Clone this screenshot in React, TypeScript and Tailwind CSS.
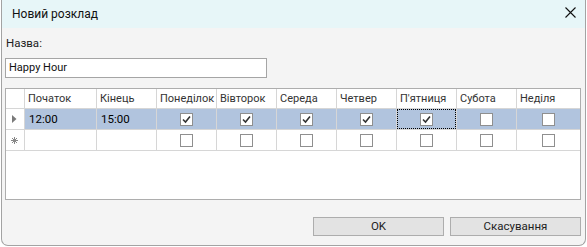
import React from "react";

const font = { fontFamily: 'Roboto, "Liberation Sans", Arial, sans-serif' };

function Check({ checked }: { checked: boolean }) {
  return (
    <div className="w-[13px] h-[13px] border border-[#8f8f8f] bg-white flex items-center justify-center">
      {checked && (
        <svg width="11" height="11" viewBox="0 0 11 11">
          <path d="M2 5.5 L4.5 8 L9 2.5" fill="none" stroke="#333" strokeWidth="1.6" />
        </svg>
      )}
    </div>
  );
}

const days = ["Понеділок", "Вівторок", "Середа", "Четвер", "П'ятниця", "Субота", "Неділя"];
const row1 = [true, true, true, true, true, false, false];

export default function App() {
  return (
    <div className="w-[587px] h-[247px] bg-white pl-[1px] text-[11px] text-[#1a1a1a]" style={font}>
      <div className="w-[585px] h-[246px] border border-t-0 border-[#a3a3a3] rounded-b-[7px] bg-[#f4f4f4] flex flex-col overflow-hidden">
        <div className="h-[28px] bg-[#e7f6f8] flex items-center justify-between pl-[10px] pr-[9px] shrink-0">
          <span className="text-[12px] text-[#111]">Новий розклад</span>
          <svg width="11" height="11" viewBox="0 0 11 11" className="mt-[-4px]">
            <path d="M0.5 0.5 L10.5 10.5 M10.5 0.5 L0.5 10.5" stroke="#111" strokeWidth="1.1" />
          </svg>
        </div>
        <div className="flex flex-col pl-[3px] pr-[4px] pt-[8px] flex-1">
          <div className="h-[14px] leading-[14px] text-[#222] pl-[1px] text-[11.5px]">Назва:</div>
          <div className="mt-[8px] w-[262px] h-[20px] border border-[#a5a5a5] bg-white flex items-center pl-[3px] text-[#111]">
            Happy Hour
          </div>
          <div className="mt-[10px] w-[576px] h-[112px] border border-[#adadad] bg-white flex flex-col">
            <div className="flex h-[20px] shrink-0">
              <div className="w-[19px] border-r border-b border-[#d6d6d6]" />
              <div className="w-[72px] border-r border-b border-[#d6d6d6] pl-[3px] leading-[19px] text-[#333]">Початок</div>
              <div className="w-[60px] border-r border-b border-[#d6d6d6] pl-[3px] leading-[19px] text-[#333]">Кінець</div>
              {days.map((d, i) => (
                <div
                  key={d}
                  className={`${i === 6 ? "flex-1" : "w-[60px] border-r"} border-b border-[#d6d6d6] pl-[3px] leading-[19px] text-[#333] whitespace-nowrap overflow-hidden`}
                >
                  {d}
                </div>
              ))}
            </div>
            <div className="flex h-[21px] shrink-0">
              <div className="w-[19px] border-r border-b border-[#d6d6d6] flex items-center justify-center pr-[2px]">
                <svg width="5" height="8" viewBox="0 0 5 8">
                  <path d="M0 0 L4.5 4 L0 8 Z" fill="#7a7a7a" />
                </svg>
              </div>
              <div className="w-[72px] border-r border-b border-[#d6d6d6] bg-[#b1c4de] pl-[4px] leading-[20px] text-black text-[11.5px]">12:00</div>
              <div className="w-[60px] border-r border-b border-[#d6d6d6] bg-[#b1c4de] pl-[4px] leading-[20px] text-black text-[11.5px]">15:00</div>
              {days.map((d, i) => (
                <div
                  key={d}
                  className={`${i === 6 ? "flex-1" : "w-[60px] border-r"} border-b border-[#d6d6d6] bg-[#b1c4de] flex items-center justify-center relative`}
                >
                  {i === 4 && <div className="absolute inset-0 border border-dotted border-black" />}
                  <Check checked={row1[i]} />
                </div>
              ))}
            </div>
            <div className="flex h-[21px] shrink-0">
              <div className="w-[19px] border-r border-b border-[#d6d6d6] flex items-center justify-center pr-[2px]">
                <svg width="7" height="7" viewBox="0 0 7 7">
                  <path d="M3.5 0 V7 M0 3.5 H7 M1 1 L6 6 M6 1 L1 6" stroke="#888" strokeWidth="1" />
                </svg>
              </div>
              <div className="w-[72px] border-r border-b border-[#d6d6d6]" />
              <div className="w-[60px] border-r border-b border-[#d6d6d6]" />
              {days.map((d, i) => (
                <div
                  key={d}
                  className={`${i === 6 ? "flex-1" : "w-[60px] border-r"} border-b border-[#d6d6d6] flex items-center justify-center`}
                >
                  <Check checked={false} />
                </div>
              ))}
            </div>
          </div>
          <div className="flex justify-end gap-[6px] pt-[17px] pr-[0px]">
            <button className="w-[131px] h-[19px] border border-[#adadad] bg-[#e3e3e3] text-[#222] leading-[17px] text-[11.5px]">OK</button>
            <button className="w-[131px] h-[19px] border border-[#adadad] bg-[#e3e3e3] text-[#222] leading-[17px] text-[11.5px]">Скасування</button>
          </div>
        </div>
      </div>
    </div>
  );
}
